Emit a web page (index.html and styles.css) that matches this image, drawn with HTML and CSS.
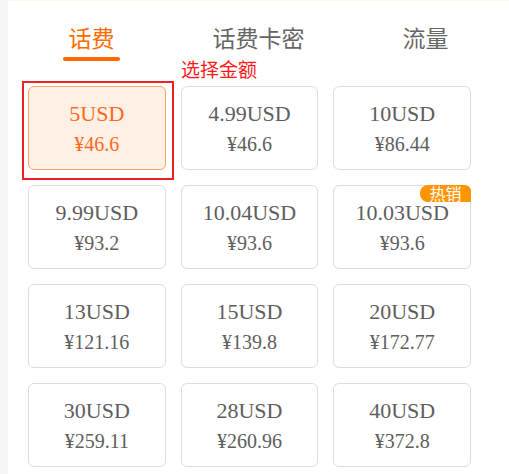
FILE: index.html
```html
<!DOCTYPE html>
<html lang="zh-CN">
<head>
	<meta charset="UTF-8">
	<title>话费充值</title>
<link rel="stylesheet" href="styles.css">
</head>
<body>
	<div class="side"></div>
	<div class="main">
		<ul class="tabs">
			<li class="on">话费</li>
			<li>话费卡密</li>
			<li>流量</li>
		</ul>
		<div class="list">
			<span class="tip">选择金额</span>
			<span class="mark"></span>
			<a href="javascript:;" class="item active"><b>5USD</b><i>¥46.6</i></a>
			<a href="javascript:;" class="item"><b>4.99USD</b><i>¥46.6</i></a>
			<a href="javascript:;" class="item"><b>10USD</b><i>¥86.44</i></a>
			<a href="javascript:;" class="item"><b>9.99USD</b><i>¥93.2</i></a>
			<a href="javascript:;" class="item"><b>10.04USD</b><i>¥93.6</i></a>
			<a href="javascript:;" class="item"><b>10.03USD</b><i>¥93.6</i><em class="hot">热销</em></a>
			<a href="javascript:;" class="item"><b>13USD</b><i>¥121.16</i></a>
			<a href="javascript:;" class="item"><b>15USD</b><i>¥139.8</i></a>
			<a href="javascript:;" class="item"><b>20USD</b><i>¥172.77</i></a>
			<a href="javascript:;" class="item"><b>30USD</b><i>¥259.11</i></a>
			<a href="javascript:;" class="item"><b>28USD</b><i>¥260.96</i></a>
			<a href="javascript:;" class="item"><b>40USD</b><i>¥372.8</i></a>
		</div>
	</div>
</body>
</html>
```

FILE: styles.css
```css
body,div,ul,li,a,span,b,i,em{margin:0;padding:0;border:0;}
li{list-style:none;}
body{display:flex;min-height:474px;background:#fff;font-family:"Noto Sans CJK SC","Noto Sans",sans-serif;}
.side{width:8px;background:#f6f6f6;}
.main{flex:1;border-top:1px solid #fdf8ee;}
.tabs{display:flex;padding-top:21px;}
.tabs li{flex:1;text-align:center;font-size:23px;line-height:31px;color:#666;}
.tabs li.on{color:#ff6a00;}
.tabs li.on:after{content:"";display:block;width:57px;height:4px;border-radius:2px;background:#ff6a00;margin:4px auto 0;}
.list{position:relative;width:443px;margin:25px 0 0 20px;display:grid;grid-template-columns:repeat(3,1fr);gap:15px;}
.item{position:relative;display:block;height:84px;box-sizing:border-box;border:1px solid #ddd;border-radius:6px;text-align:center;text-decoration:none;color:#5e5e5e;padding-top:13px;}
.item b,.item i{display:block;font-weight:normal;font-style:normal;font-family:"Liberation Serif","Times New Roman",serif;}
.item b{font-size:22px;line-height:28px;}
.item i{font-size:20px;line-height:32px;}
.item.active{background:#fff0e5;border-color:#ffa366;color:#ff6a1a;}
.hot{position:absolute;top:-1px;right:-1px;width:51px;height:17px;line-height:17px;background:#ff9500;color:#fff;font-style:normal;font-size:16px;border-radius:8px 6px 0 8px;text-align:center;}
.tip{position:absolute;left:153px;top:-27px;font-size:19px;line-height:19px;color:#ff1a1a;white-space:nowrap;}
.mark{position:absolute;left:-6px;top:-5px;width:152px;height:99px;box-sizing:border-box;border:2px solid #f02020;z-index:2;}
```
